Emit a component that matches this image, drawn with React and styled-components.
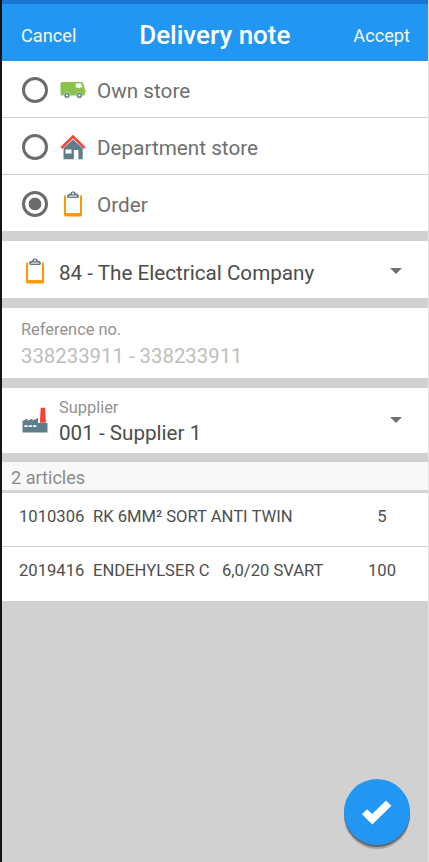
import { useState } from "react";
import styled, { createGlobalStyle } from "styled-components";

const destinations = [
  { id: "own", label: "Own store", Icon: VanIcon },
  { id: "department", label: "Department store", Icon: HouseIcon },
  { id: "order", label: "Order", Icon: ClipboardIcon },
];

const articles = [
  { id: "1010306", name: "RK 6MM² SORT ANTI TWIN", amount: 5 },
  { id: "2019416", name: "ENDEHYLSER C   6,0/20 SVART", amount: 100 },
];

export default function App() {
  const [selected, setSelected] = useState("order");

  return (
    <>
      <GlobalStyle />
      <Screen>
        <StatusBar />
        <Header>
          <HeaderButton>Cancel</HeaderButton>
          <Title>Delivery note</Title>
          <HeaderButton>Accept</HeaderButton>
        </Header>

        <Options>
          {destinations.map(({ id, label, Icon }) => (
            <Option key={id} onClick={() => setSelected(id)}>
              <Radio $checked={selected === id} />
              <Icon />
              <OptionLabel>{label}</OptionLabel>
            </Option>
          ))}
        </Options>

        <OrderCard>
          <ClipboardIcon />
          <SelectText>
            <Value>84 - The Electrical Company</Value>
          </SelectText>
          <Arrow />
        </OrderCard>

        <ReferenceCard>
          <FieldLabel>Reference no.</FieldLabel>
          <ReferenceValue>338233911 - 338233911</ReferenceValue>
        </ReferenceCard>

        <SupplierCard>
          <FactoryIcon />
          <SelectText>
            <FieldLabel>Supplier</FieldLabel>
            <Value>001 - Supplier 1</Value>
          </SelectText>
          <Arrow />
        </SupplierCard>

        <ArticlesHeader>2 articles</ArticlesHeader>
        {articles.map((article) => (
          <ArticleRow key={article.id}>
            <span>{article.id}</span>
            <ArticleName>{article.name}</ArticleName>
            <Amount>{article.amount}</Amount>
          </ArticleRow>
        ))}

        <ConfirmButton aria-label="Confirm">
          <svg width="30" height="25" viewBox="0 0 30 25">
            <path d="M0 14.300 5.100 9.200 10.200 14.100 24 .5 29.400 5.700 10.300 24.600z" fill="#fff" />
          </svg>
        </ConfirmButton>
      </Screen>
    </>
  );
}

function VanIcon() {
  return (
    <svg width="26" height="26" viewBox="0 0 26 26">
      <path
        d="M2 5h19.500q1 0 1.500 1l1.600 4.500v2.200h1v2.600h-.8v3.200H1.600Q.5 18.500.5 17V6.500Q.5 5 2 5z"
        fill="#8bc34a"
      />
      <path d="M15.800 6.600h4.900l1.700 4h-2.700l-1 .9-1-.9h-1.900z" fill="#fff" />
      <circle cx="6.900" cy="18.300" r="2.900" fill="#546e7a" stroke="#fff" strokeWidth=".5" />
      <circle cx="19.400" cy="18.300" r="2.900" fill="#546e7a" stroke="#fff" strokeWidth=".5" />
      <circle cx="6.900" cy="18.300" r="1.200" fill="#e3edf1" />
      <circle cx="19.400" cy="18.300" r="1.200" fill="#e3edf1" />
    </svg>
  );
}

function HouseIcon() {
  return (
    <svg width="26" height="26" viewBox="0 0 26 26">
      <path d="M13 4.500 22.700 14v11.300H3.500V14z" fill="#607d8b" />
      <path d="M1.200 14 13 3.200 24.800 14" fill="none" stroke="#fff" strokeWidth="3.200" />
      <path d="M1.400 14 13 2.600 24.600 14" fill="none" stroke="#f44336" strokeWidth="2.500" />
      <path d="M5.500 15.600h6v4H5.500zM13.900 16h4.500v9.500h-4.500z" fill="#fff" />
    </svg>
  );
}

function ClipboardIcon() {
  return (
    <svg width="26" height="26" viewBox="0 0 26 26">
      <path
        d="M4 5.500q0-1.300 1.500-1.300h15Q22 4.200 22 5.500V24q0 1.500-1.500 1.500h-15Q4 25.500 4 24z"
        fill="#ff9800"
      />
      <path d="M6 3.500h14v18.600H6z" fill="#fff" />
      <path
        d="M7 5.500Q7 3 10 2.800 10.600.3 13 .3t3 2.500q3 .2 3 2.700 0 1.400-1.500 1.400h-9Q7 6.900 7 5.500z"
        fill="#607d8b"
      />
      <path d="M8.800 5.700q0-1.100 1.200-1.100h6q1.200 0 1.200 1.100z" fill="#ffe0b2" />
      <circle cx="13" cy="2.500" r=".9" fill="#fff" />
    </svg>
  );
}

function FactoryIcon() {
  return (
    <svg width="26" height="26" viewBox="0 0 26 26">
      <path d="M18.700.800h4.400l.8 15h-6z" fill="#f44336" />
      <path
        d="M.5 14 5.500 11.600v2.200l5-2.400v2.200l5.600-2.600v5.100h9.400v9.300H.5z"
        fill="#607d8b"
      />
      <path d="M2.300 18.300h3.300v1.800H2.300zM6.600 18.300h3.400v1.800H6.600zM11 18.300h3.400v1.800H11z" fill="#fff" />
    </svg>
  );
}

const GlobalStyle = createGlobalStyle`
  * {
    box-sizing: border-box;
  }

  body {
    margin: 0;
    font-family: Roboto, "Liberation Sans", sans-serif;
  }

  button {
    border: none;
    padding: 0;
    font-family: inherit;
    cursor: pointer;
  }
`;

const Screen = styled.main`
  width: 429px;
  height: 862px;
  overflow: hidden;
  background: #d1d1d1;
  border-left: 2px solid #141414;
  border-right: 1px solid #e2e2e2;
`;

const StatusBar = styled.div`
  height: 4px;
  margin-right: -1px;
  background: #1976d2;
`;

const Header = styled.header`
  display: flex;
  align-items: center;
  justify-content: space-between;
  height: 57px;
  margin-right: -1px;
  padding: 4px 19px 0;
  background: #2196f3;
  color: #fff;
`;

const HeaderButton = styled.button`
  padding-top: 1px;
  background: none;
  color: #f1f8fe;
  font-size: 18.2px;
`;

const Title = styled.h1`
  margin: 0;
  font-size: 26px;
  font-weight: 500;
`;

const Options = styled.section`
  background: #fff;
`;

const Option = styled.div`
  display: flex;
  align-items: center;
  height: 56px;
  padding: 2px 0 0 20px;

  & + & {
    height: 57px;
    border-top: 1px solid #cfcfcf;
  }

  svg {
    margin-left: 12px;
  }
`;

const Radio = styled.span`
  width: 26px;
  height: 26px;
  border: 3px solid #6c6c6c;
  border-radius: 50%;
  background: ${({ $checked }) =>
    $checked ? "radial-gradient(circle, #6c6c6c 6px, #fff 6.7px)" : "#fff"};
`;

const OptionLabel = styled.span`
  margin-left: 11px;
  padding-top: 1px;
  color: #6f6f6f;
  font-size: 20.7px;
`;

const SelectCard = styled.section`
  display: flex;
  align-items: center;
  background: #fff;
`;

const OrderCard = styled(SelectCard)`
  height: 57px;
  margin-top: 10px;
  padding: 2px 26px 0 20px;
`;

const SupplierCard = styled(SelectCard)`
  height: 65px;
  margin-top: 10px;
  padding: 0 26px 2px 20px;
`;

const SelectText = styled.div`
  display: flex;
  flex: 1;
  flex-direction: column;
  padding: 5px 0 0 11px;
`;

const FieldLabel = styled.span`
  color: #929292;
  font-size: 16.4px;
  line-height: 22px;
`;

const Value = styled.span`
  color: #4c4c4c;
  font-size: 20.65px;
  line-height: 28px;
`;

const Arrow = styled.span`
  border: 6px solid transparent;
  border-top-color: #707070;
  border-bottom: 0;
`;

const ReferenceCard = styled.section`
  display: flex;
  flex-direction: column;
  height: 70px;
  margin-top: 10px;
  padding: 11px 19px 0;
  background: #fff;
`;

const ReferenceValue = styled.span`
  color: #bdbdbd;
  font-size: 20.35px;
  line-height: 30px;
`;

const ArticlesHeader = styled.div`
  height: 31px;
  margin-top: 9px;
  padding-left: 9px;
  border-bottom: 3px solid #d4d4d4;
  background: #f8f8f8;
  color: #8c8c8c;
  font-size: 18.1px;
  line-height: 31px;
`;

const ArticleRow = styled.div`
  display: grid;
  grid-template-columns: 74px 1fr 60px;
  height: 53px;
  padding: 10px 16px 0 17px;
  background: #fff;
  color: #4e4e4e;
  font-size: 16.6px;
  line-height: 27px;

  & + & {
    height: 55px;
    border-top: 1px solid #cfcfcf;
  }
`;

const ArticleName = styled.span`
  white-space: pre;
`;

const Amount = styled.span`
  text-align: center;
`;

const ConfirmButton = styled.button`
  position: absolute;
  top: 779px;
  left: 344px;
  display: flex;
  align-items: center;
  justify-content: center;
  width: 66px;
  height: 66px;
  border-radius: 50%;
  background: #2196f3;
  box-shadow: 0 2px 0 #666, 0 4px 1px #a0a0a0;
`;
